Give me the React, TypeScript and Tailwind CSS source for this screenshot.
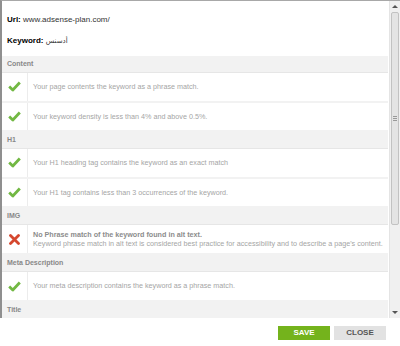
const Check = () => (
  <svg width="13" height="11" viewBox="0 0 13 11">
    <path d="M1.2 5.6 L4.8 9 L11.8 1.5" fill="none" stroke="#72b843" strokeWidth="2.8" strokeLinejoin="round" />
  </svg>
);

const Cross = () => (
  <svg width="11" height="11" viewBox="0 0 11 11">
    <path d="M1.5 1.5 L9.5 9.5 M9.5 1.5 L1.5 9.5" stroke="#d5472f" strokeWidth="2.8" strokeLinecap="round" />
  </svg>
);

interface RowProps {
  ok?: boolean;
  text: string;
  note?: string;
  h?: string;
}

const Header = ({ title }: { title: string }) => (
  <div className="h-[17px] flex items-center pl-[5px] bg-[#f2f2f2] border-b border-[#e6e6e6] text-[7px] font-bold text-[#888]">
    {title}
  </div>
);

const Row = ({ ok = true, text, note, h = "h-[29.5px]" }: RowProps) => (
  <div className={`${h} flex border-b-2 border-[#f2f2f2]`}>
    <div className="w-[26px] flex items-center justify-center border-r border-[#ececec]">
      {ok ? <Check /> : <Cross />}
    </div>
    <div className="flex flex-col justify-center pl-[5px] text-[7.2px] leading-[9.5px] text-[#a5a5a5] whitespace-nowrap">
      {note ? (
        <>
          <span className="font-bold text-[#8c8c8c]">{text}</span>
          <span>{note}</span>
        </>
      ) : (
        <span>{text}</span>
      )}
    </div>
  </div>
);

const Scrollbar = () => (
  <div className="w-[11px] ml-[1px] flex flex-col bg-[#f0f0f0] border-l border-[#e4e4e4]">
    <div className="h-[11px] flex items-center justify-center">
      <div className="w-0 h-0 border-l-[3px] border-r-[3px] border-b-[3px] border-l-transparent border-r-transparent border-b-[#555]" />
    </div>
    <div className="h-[213px] mx-[1px] rounded-[2px] border border-[#c2c2c2] bg-[#e4e4e4] flex items-center justify-center">
      <div className="flex flex-col gap-[1px]">
        <div className="w-[4px] h-[1px] bg-[#999]" />
        <div className="w-[4px] h-[1px] bg-[#999]" />
        <div className="w-[4px] h-[1px] bg-[#999]" />
      </div>
    </div>
    <div className="flex-1" />
    <div className="h-[11px] flex items-center justify-center">
      <div className="w-0 h-0 border-l-[3px] border-r-[3px] border-t-[3px] border-l-transparent border-r-transparent border-t-[#555]" />
    </div>
  </div>
);

const App = () => {
  return (
    <div className="w-[400px] h-[346px] bg-white font-['Liberation_Sans','DejaVu_Sans',Arial,sans-serif]">
      <div className="flex h-[318px] border-t border-[#a8a8a8] border-l-2 border-l-[#8f8f8f]">
        <div className="flex-1 overflow-hidden">
          <div className="px-[5px] pt-[13px] pb-[9px] text-[8px] leading-[12px] text-[#333]">
            <div>
              <b className="text-black">Url:</b> www.adsense-plan.com/
            </div>
            <div className="mt-[9px]">
              <b className="text-black">Keyword:</b> <span className="font-['DejaVu_Sans',sans-serif] text-[7px]">أدسنس</span>
            </div>
          </div>
          <Header title="Content" />
          <Row text="Your page contents the keyword as a phrase match." />
          <Row text="Your keyword density is less than 4% and above 0.5%." />
          <Header title="H1" />
          <Row text="Your H1 heading tag contains the keyword as an exact match" />
          <Row text="Your H1 tag contains less than 3 occurrences of the keyword." />
          <Header title="IMG" />
          <Row
            ok={false}
            h="h-[30px]"
            text="No Phrase match of the keyword found in alt text."
            note="Keyword phrase match in alt text is considered best practice for accessibility and to describe a page's content."
          />
          <Header title="Meta Description" />
          <Row h="h-[30px]" text="Your meta description contains the keyword as a phrase match." />
          <Header title="Title" />
        </div>
        <Scrollbar />
      </div>
      <div className="flex justify-end gap-[4px] pr-[14px] pt-[8px]">
        <button className="w-[52px] h-[14px] bg-[#74b31c] text-white text-[8px] font-bold">SAVE</button>
        <button className="w-[52px] h-[14px] bg-[#e2e2e2] text-[#555] text-[8px] font-bold">CLOSE</button>
      </div>
    </div>
  );
};

export default App;
